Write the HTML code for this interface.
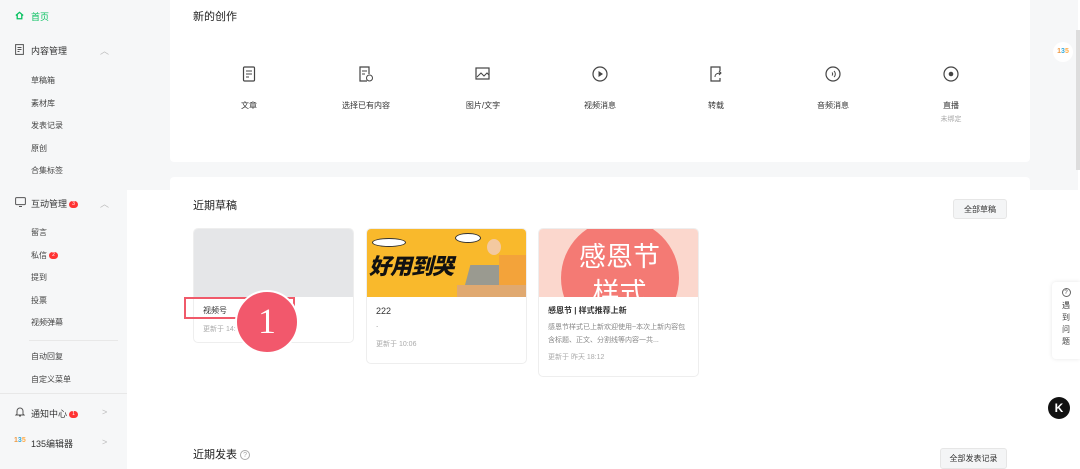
<!DOCTYPE html>
<html><head><meta charset="utf-8"><style>
*{margin:0;padding:0;box-sizing:border-box}
body{width:1080px;height:469px;overflow:hidden;position:relative;background:#fff;font-family:"Liberation Sans","Noto Sans CJK SC",sans-serif;color:#333}
.abs{position:absolute}
.side{left:0;top:0;width:127px;height:469px;background:#f6f7f8}
.graytop{left:0;top:0;width:1078px;height:190px;background:#f6f7f8}
.card{background:#fff;border-radius:4px}
.nav{position:absolute;font-size:9px;color:#333;white-space:nowrap}
.sub{position:absolute;left:31px;font-size:8px;color:#444}
.badge{display:inline-block;width:9px;height:7px;border-radius:4px;background:#f33;color:#fff;font-size:5px;text-align:center;line-height:7px;vertical-align:middle;margin-left:2px}
.item{position:absolute;top:66px;width:100px;text-align:center;font-size:8px;color:#333}
.item svg{display:block;margin:0 auto 18px}
.dc{position:absolute;top:228px;width:161px;border:1px solid #eee;border-radius:5px;background:#fff;overflow:hidden}
.btn{position:absolute;background:#f4f5f6;border:1px solid #e6e6e6;border-radius:3px;font-size:8px;color:#333;text-align:center}
</style></head><body>
<div class="abs graytop"></div>
<div class="abs side"></div>
<div class="abs card" style="left:170px;top:0;width:860px;height:162px;border-radius:0 0 4px 4px"></div>
<div class="abs card" style="left:170px;top:177px;width:860px;height:20px"></div>
<div class="abs" style="left:127px;top:190px;width:951px;height:279px;background:#fff"></div>
<div class="abs" style="left:1076px;top:30px;width:4px;height:140px;background:#ddd"></div>

<svg class="abs" style="left:14px;top:10px" width="11" height="11" viewBox="0 0 12 12"><path d="M2 6L6 2.5 10 6M3.5 5v4.5h5V5" fill="none" stroke="#07c160" stroke-width="1.4"/></svg>
<div class="nav" style="left:31px;top:10px;color:#07c160">首页</div>
<svg class="abs" style="left:15px;top:44px" width="9" height="11"><rect x=".6" y=".6" width="7.8" height="9.8" fill="none" stroke="#555"/><path d="M2.5 3.5h4M2.5 5.5h4M2.5 7.5h2" stroke="#555"/></svg>
<div class="nav" style="left:31px;top:44px">内容管理</div>
<div class="nav" style="left:100px;top:44px;color:#bbb">︿</div>
<div class="sub" style="top:75px">草稿箱</div>
<div class="sub" style="top:98px">素材库</div>
<div class="sub" style="top:120px">发表记录</div>
<div class="sub" style="top:143px">原创</div>
<div class="sub" style="top:165px">合集标签</div>
<svg class="abs" style="left:15px;top:197px" width="11" height="10"><rect x=".6" y=".6" width="9.8" height="7" rx="1" fill="none" stroke="#555"/><path d="M4 9.5h3" stroke="#555"/></svg>
<div class="nav" style="left:31px;top:197px">互动管理<span class="badge">3</span></div>
<div class="nav" style="left:100px;top:197px;color:#bbb">︿</div>
<div class="sub" style="top:227px">留言</div>
<div class="sub" style="top:250px">私信<span class="badge">2</span></div>
<div class="sub" style="top:272px">提到</div>
<div class="sub" style="top:295px">投票</div>
<div class="sub" style="top:317px">视频弹幕</div>
<div class="abs" style="left:29px;top:340px;width:89px;height:1px;background:#e8e8e8"></div>
<div class="sub" style="top:351px">自动回复</div>
<div class="sub" style="top:374px">自定义菜单</div>
<div class="abs" style="left:0;top:393px;width:127px;height:1px;background:#e8e8e8"></div>
<svg class="abs" style="left:15px;top:406px" width="10" height="11"><path d="M2 8V5a3 3 0 016 0v3l1 1H1zM4 10h2" fill="none" stroke="#555"/></svg>
<div class="nav" style="left:31px;top:407px">通知中心<span class="badge">1</span></div>
<div class="nav" style="left:102px;top:407px;color:#bbb">&gt;</div>
<div class="nav" style="left:14px;top:437px;font-size:7px;font-weight:bold;color:#e94">1<span style="color:#3ad">3</span><span style="color:#fa4">5</span></div>
<div class="nav" style="left:31px;top:437px">135编辑器</div>
<div class="nav" style="left:102px;top:437px;color:#bbb">&gt;</div>

<div class="abs" style="left:193px;top:8px;font-size:11px;color:#222">新的创作</div>
<div class="item" style="left:199px"><svg width="14" height="16"><rect x="1.5" y="1" width="11" height="14" rx="1" fill="none" stroke="#444" stroke-width="1.2"/><path d="M4 5h6M4 8h6M4 11h3" stroke="#444"/></svg>文章</div>
<div class="item" style="left:316px"><svg width="16" height="16"><path d="M9 15H2V1h9v7" fill="none" stroke="#444" stroke-width="1.2"/><path d="M4 5h5M4 8h3" stroke="#444"/><circle cx="11.5" cy="12" r="3" fill="none" stroke="#444"/></svg>选择已有内容</div>
<div class="item" style="left:433px"><svg width="16" height="16"><rect x="1" y="2" width="13" height="11" fill="none" stroke="#444" stroke-width="1.2"/><path d="M2 11l4-4 3 3 3-3 2 2" fill="none" stroke="#444"/></svg>图片/文字</div>
<div class="item" style="left:550px"><svg width="16" height="16"><circle cx="8" cy="8" r="7" fill="none" stroke="#444" stroke-width="1.2"/><path d="M6.5 5v6l4.5-3z" fill="#444"/></svg>视频消息</div>
<div class="item" style="left:666px"><svg width="16" height="16"><path d="M12 5V1H3v14h9v-3" fill="none" stroke="#444" stroke-width="1.2"/><path d="M7 11c0-3 2-4 6-4M11 5l2 2-2 2" fill="none" stroke="#444"/></svg>转载</div>
<div class="item" style="left:783px"><svg width="16" height="16"><circle cx="8" cy="8" r="7" fill="none" stroke="#444" stroke-width="1.2"/><path d="M7 6.5a2 2 0 010 3M9 5a4 4 0 010 6" fill="none" stroke="#444"/></svg>音频消息</div>
<div class="item" style="left:901px"><svg width="16" height="16"><circle cx="8" cy="8" r="7" fill="none" stroke="#444" stroke-width="1.2"/><circle cx="8" cy="8" r="2.3" fill="#444"/></svg>直播<div style="color:#aaa;font-size:7px;margin-top:3px">未绑定</div></div>

<div class="abs" style="left:193px;top:197px;font-size:11px;color:#222">近期草稿</div>
<div class="btn" style="left:953px;top:199px;width:54px;height:20px;line-height:19px">全部草稿</div>
<div class="dc" style="left:193px;height:115px"><div style="height:68px;background:#e5e6e8"></div>
<div style="padding:8px 9px;font-size:8px">视频号</div><div style="padding:0 9px;font-size:7px;color:#aaa">更新于 14:5</div></div>
<div class="dc" style="left:366px;height:136px"><div style="height:68px;background:#f9b92c;position:relative;overflow:hidden">
<div style="position:absolute;left:2px;top:20px;font-size:22px;font-weight:900;font-style:italic;color:#111;letter-spacing:-1px">好用到哭</div>
<div style="position:absolute;left:5px;top:9px;width:34px;height:9px;border-radius:50%;background:#fff;border:1px solid #333"></div>
<div style="position:absolute;left:88px;top:4px;width:26px;height:10px;border-radius:50%;background:#fff;border:1px solid #333"></div>
<div style="position:absolute;left:100px;top:36px;width:38px;height:25px;background:#9a9a90;transform:skewX(-15deg)"></div>
<div style="position:absolute;left:120px;top:10px;width:14px;height:16px;border-radius:50%;background:#f3c9a0"></div>
<div style="position:absolute;left:132px;top:26px;width:30px;height:42px;background:#f3a33a"></div>
<div style="position:absolute;left:90px;top:56px;width:72px;height:12px;background:#e0a970"></div></div>
<div style="padding:9px 9px 4px;font-size:9px">222</div><div style="padding:0 9px;font-size:8px;color:#888">.</div><div style="padding:10px 9px 0;font-size:7px;color:#aaa">更新于 10:06</div></div>
<div class="dc" style="left:538px;height:149px"><div style="height:68px;background:#fbd7cd;position:relative;overflow:hidden">
<div style="position:absolute;left:22px;top:-10px;width:118px;height:118px;border-radius:50%;background:#f47a74"></div>
<div style="position:absolute;left:0;top:10px;width:161px;text-align:center;font-size:27px;color:#fff;line-height:36px">感恩节<br>样式</div></div>
<div style="padding:8px 9px 5px;font-size:8px;font-weight:bold;color:#333">感恩节 | 样式推荐上新</div>
<div style="padding:0 9px;font-size:7px;color:#888;line-height:13px">感恩节样式已上新欢迎使用~本次上新内容包含标题、正文、分割线等内容一共...</div>
<div style="padding:5px 9px 0;font-size:7px;color:#aaa">更新于 昨天 18:12</div></div>

<div class="abs" style="left:184px;top:297px;width:111px;height:22px;border:2px solid #f05a6a"></div>
<div class="abs" style="left:235px;top:290px;width:64px;height:64px;border-radius:50%;background:#f2586c;border:2px solid #fff;color:#fff;font-family:'Liberation Serif',serif;font-size:36px;text-align:center;line-height:58px">1</div>

<div class="abs" style="left:193px;top:446px;font-size:11px;color:#222">近期发表 <span style="display:inline-block;width:10px;height:10px;border:1px solid #aaa;border-radius:50%;font-size:7px;color:#aaa;text-align:center;line-height:9px;vertical-align:middle">?</span></div>
<div class="btn" style="left:940px;top:448px;width:67px;height:21px;line-height:20px">全部发表记录</div>

<div class="abs" style="left:1053px;top:42px;width:20px;height:20px;border-radius:50%;background:#fff;font-size:7px;font-weight:bold;text-align:center;line-height:20px;color:#e94">1<span style="color:#3ad">3</span><span style="color:#fa4">5</span></div>
<div class="abs" style="left:1052px;top:282px;width:28px;height:77px;background:#fff;border-radius:4px 0 0 4px;box-shadow:0 0 4px rgba(0,0,0,.1);font-size:8px;color:#444;text-align:center;line-height:12px;padding-top:6px"><div style="width:9px;height:9px;border:1px solid #666;border-radius:50%;margin:0 auto 3px;font-size:6px;line-height:8px">?</div>遇<br>到<br>问<br>题</div>
<div class="abs" style="left:1048px;top:397px;width:22px;height:22px;border-radius:50%;background:#111;color:#fff;font-weight:bold;font-size:12px;text-align:center;line-height:22px">K</div>
</body></html>
